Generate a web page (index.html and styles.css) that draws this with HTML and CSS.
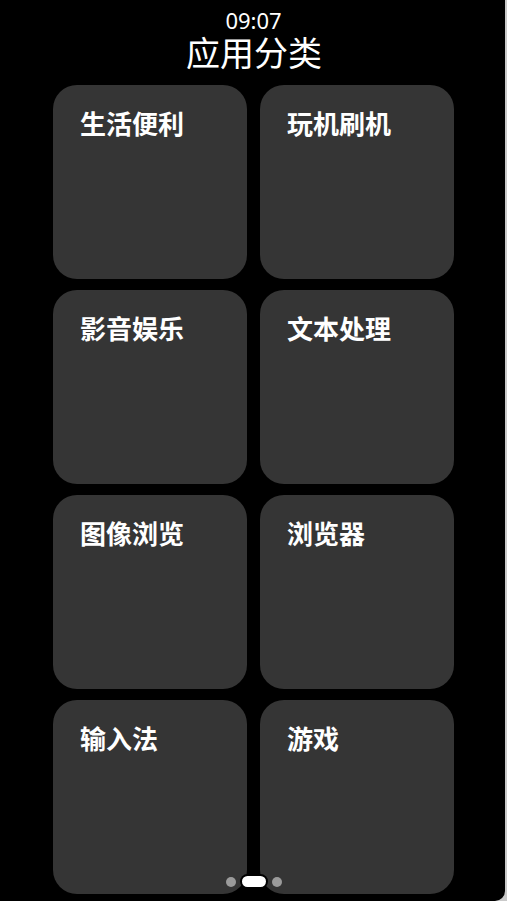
FILE: index.html
```html
<!DOCTYPE html>
<html lang="zh">
<head>
<meta charset="utf-8">
<title>应用分类</title>
<link rel="stylesheet" href="styles.css">
</head>
<body>
<div class="screen">
  <header class="header">
    <div class="time">09:07</div>
    <h1 class="title">应用分类</h1>
  </header>
  <main class="grid">
    <div class="card"><span class="label">生活便利</span></div>
    <div class="card"><span class="label">玩机刷机</span></div>
    <div class="card"><span class="label">影音娱乐</span></div>
    <div class="card"><span class="label">文本处理</span></div>
    <div class="card"><span class="label">图像浏览</span></div>
    <div class="card"><span class="label">浏览器</span></div>
    <div class="card"><span class="label">输入法</span></div>
    <div class="card"><span class="label">游戏</span></div>
  </main>
  <div class="pager">
    <span class="dot"></span>
    <span class="dot active"></span>
    <span class="dot"></span>
  </div>
</div>
</body>
</html>
```
FILE: styles.css
```css
html, body {
  margin: 0;
  padding: 0;
}
body {
  background: #c9c9c9;
  width: 507px;
  height: 901px;
  overflow: hidden;
  font-family: "Noto Sans CJK SC", "Noto Sans", sans-serif;
  color: #fff;
}
.screen {
  position: relative;
  width: 505px;
  height: 901px;
  background: #000;
  border-bottom-right-radius: 10px;
  display: flex;
  flex-direction: column;
}
.header {
  display: flex;
  flex-direction: column;
  align-items: center;
  padding-top: 8px;
}
.time {
  font-family: "Noto Sans", sans-serif;
  font-size: 22px;
  line-height: 24px;
  margin-left: 2px;
}
.title {
  margin: 2px 0 0 3px;
  font-size: 34px;
  font-weight: 400;
  line-height: 36px;
}
.grid {
  margin-top: 15px;
  margin-left: 53px;
  display: grid;
  grid-template-columns: 194px 194px;
  grid-auto-rows: 194px;
  column-gap: 13px;
  row-gap: 11px;
}
.card {
  background: #353535;
  border-radius: 24px;
  padding: 25px 27px;
  box-sizing: border-box;
}
.label {
  display: block;
  font-size: 26px;
  line-height: 1;
  font-weight: 700;
}
.pager {
  position: absolute;
  left: 226px;
  top: 876px;
  display: flex;
  align-items: center;
  gap: 4px;
}
.dot {
  width: 10px;
  height: 10px;
  border-radius: 50%;
  background: #9b9b9b;
}
.dot.active {
  width: 24px;
  height: 11px;
  border-radius: 6px;
  background: #fff;
  box-shadow: 0 0 0 2px #000;
  margin: 0 2px;
}
```
